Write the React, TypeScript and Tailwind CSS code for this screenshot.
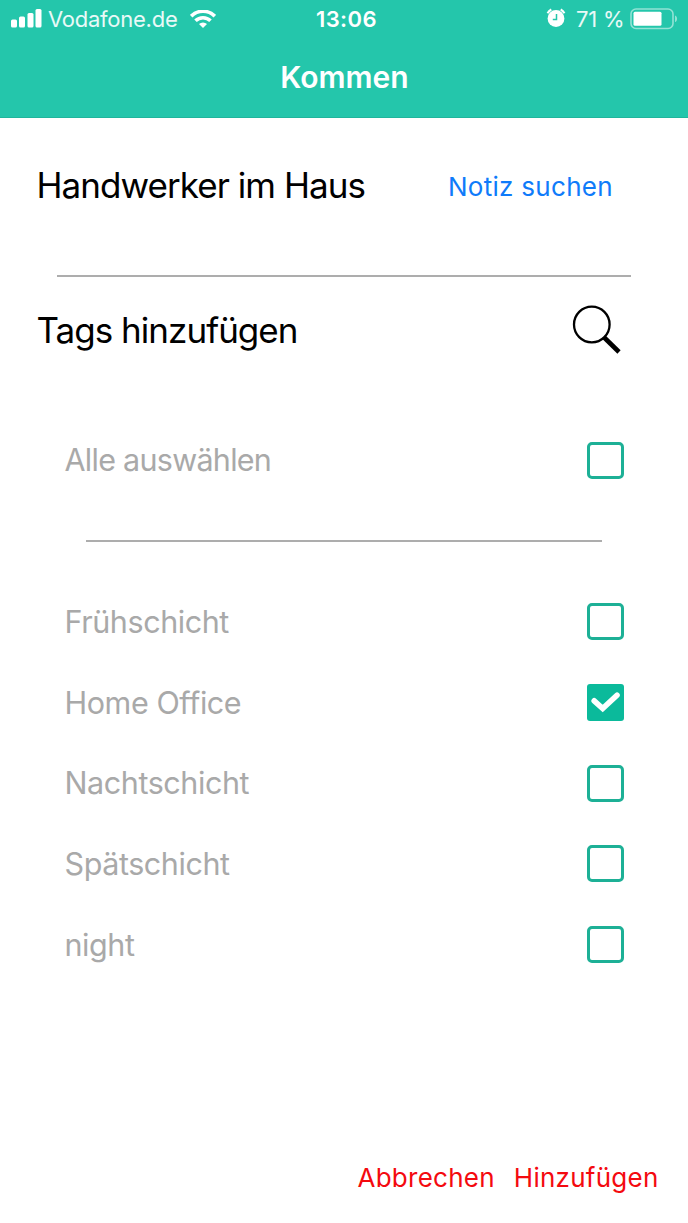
import { useState } from 'react';

const tagNames = ['Frühschicht', 'Home Office', 'Nachtschicht', 'Spätschicht', 'night'];

const StatusBar = () => {
    return (
        <div className="flex h-[38px] items-center text-[22px] text-white">
            <div className="flex w-[316px] items-center pl-[11px]">
                <svg width="31" height="20" viewBox="0 0 31 20" fill="currentColor">
                    <rect x="0" y="10.5" width="6" height="8" rx="1.5" />
                    <rect x="8" y="7.5" width="6" height="11" rx="1.5" />
                    <rect x="16.5" y="4" width="6" height="14.5" rx="1.5" />
                    <rect x="24.5" y="0" width="6" height="18.5" rx="1.5" />
                </svg>
                <span className="ml-[6px] w-[129px] whitespace-nowrap tracking-[-0.25px] text-white/90">Vodafone.de</span>
                <svg className="ml-[13px]" width="26" height="19" viewBox="0 0 26 19" fill="none" stroke="currentColor" strokeWidth="3.6">
                    <path d="M1.2 6.1a16.8 16.8 0 0 1 23.6 0" />
                    <path d="M5.5 10.8a10.7 10.7 0 0 1 15 0" />
                    <path d="M13 18.1l-4-4.1a5.8 5.8 0 0 1 8 0z" fill="currentColor" stroke="none" />
                </svg>
            </div>
            <span className="w-[230px] font-semibold tracking-[0.4px]">13:06</span>
            <svg className="-mt-0.5" width="20" height="20" viewBox="0 0 20 20" fill="none">
                <circle cx="10" cy="10.5" r="8.4" fill="currentColor" />
                <path d="M1.5 5.2a10 10 0 0 1 3.8-3.7M18.5 5.2a10 10 0 0 0-3.8-3.7" stroke="currentColor" strokeWidth="2" />
                <path d="M10.5 6v5.4H6.8" stroke="#24c6ab" strokeWidth="1.5" />
            </svg>
            <span className="ml-[10px] w-[54px] whitespace-nowrap tracking-[-0.2px] text-white/90">71 %</span>
            <svg width="49" height="22" viewBox="0 0 49 22" fill="none">
                <rect x="1" y="1" width="42" height="19.5" rx="5" stroke="white" strokeOpacity="0.5" strokeWidth="1.6" />
                <rect x="3.5" y="3.7" width="28" height="14" rx="1.5" fill="white" />
                <path d="M45 7.4c2.8 1 2.8 5.7 0 6.7z" fill="white" fillOpacity="0.5" />
            </svg>
        </div>
    )
};

const Checkbox = ({ checked }: { checked: boolean }) => {
    if (!checked) {
        return <span className="h-[37px] w-[37px] rounded-[5px] border-3 border-[#1db096]" />
    }
    return (
        <span className="h-[37px] w-[37px] rounded-[3px] bg-[#0bba9b]">
            <svg width="37" height="37" viewBox="0 0 37 37" fill="none" stroke="white" strokeWidth="5.6" strokeLinecap="round" strokeLinejoin="miter">
                <path d="M7.2 16.8l8.5 7.7L30 11.2" />
            </svg>
        </span>
    )
};

interface TagRowProps {
    label: string;
    checked: boolean;
    onToggle: () => void;
    className?: string;
}

const TagRow = ({ label, checked, onToggle, className = 'h-[80.7px] tracking-[-0.42px]' }: TagRowProps) => {
    return (
        <button
            type="button"
            role="checkbox"
            aria-checked={checked}
            onClick={onToggle}
            className={`flex w-full items-center justify-between pr-16 pl-[64.5px] text-[30.5px] text-[#a9a9a9] ${className}`}
        >
            <span>{label}</span>
            <Checkbox checked={checked} />
        </button>
    )
};

const App = () => {
    const [selected, setSelected] = useState<string[]>(['Home Office']);

    const allSelected = selected.length === tagNames.length;

    const toggleTag = (name: string) => {
        setSelected(selected.includes(name) ? selected.filter((tag) => tag !== name) : [...selected, name])
    };

    return (
        <main className="flex h-[1223px] w-[688px] flex-col bg-white font-['Inter',sans-serif]">
            <header className="h-[118px] border-b border-[#20b59c] bg-[#24c6ab]">
                <StatusBar />
                <h1 className="flex h-[78px] items-center justify-center pl-px text-[30px] font-semibold text-white">Kommen</h1>
            </header>

            <section className="flex h-[136px] items-center justify-between pr-[75px] pl-[36.5px]">
                <h2 className="-mt-0.5 text-[35px] tracking-[-0.95px] text-black">Handwerker im Haus</h2>
                <button type="button" className="text-[26px] tracking-[0.3px] text-[#0f7bfa]">Notiz suchen</button>
            </section>
            <hr className="mx-[57px] mt-[21px] border-t-2 border-[#adadad]" />

            <section className="flex h-[106px] items-center justify-between pr-[67px] pl-[36.5px]">
                <h2 className="text-[35px] tracking-[-0.97px] text-black">Tags hinzufügen</h2>
                <button type="button" aria-label="Tags suchen" className="-mt-0.5">
                    <svg width="49" height="49" viewBox="0 0 49 49" fill="none" stroke="black">
                        <circle cx="19.8" cy="19.5" r="17.8" strokeWidth="2.3" />
                        <path d="M31.7 32L47 47" strokeWidth="4.6" />
                    </svg>
                </button>
            </section>
            <TagRow
                label="Alle auswählen"
                checked={allSelected}
                onToggle={() => setSelected(allSelected ? [] : tagNames)}
                className="h-[154px] tracking-[-0.72px]"
            />
            <hr className="mx-[86px] mt-[3px] border-t-2 border-[#adadad]" />

            <section className="pt-[39.5px]">
                {tagNames.map((name) => (
                    <TagRow key={name} label={name} checked={selected.includes(name)} onToggle={() => toggleTag(name)} />
                ))}
            </section>

            <footer className="mt-auto flex h-[92px] items-center justify-end gap-[19px] pr-[29.5px] text-[26px] tracking-[0.25px] text-[#f40a0f]">
                <button type="button">Abbrechen</button>
                <button type="button">Hinzufügen</button>
            </footer>
        </main>
    )
};

export default App;
